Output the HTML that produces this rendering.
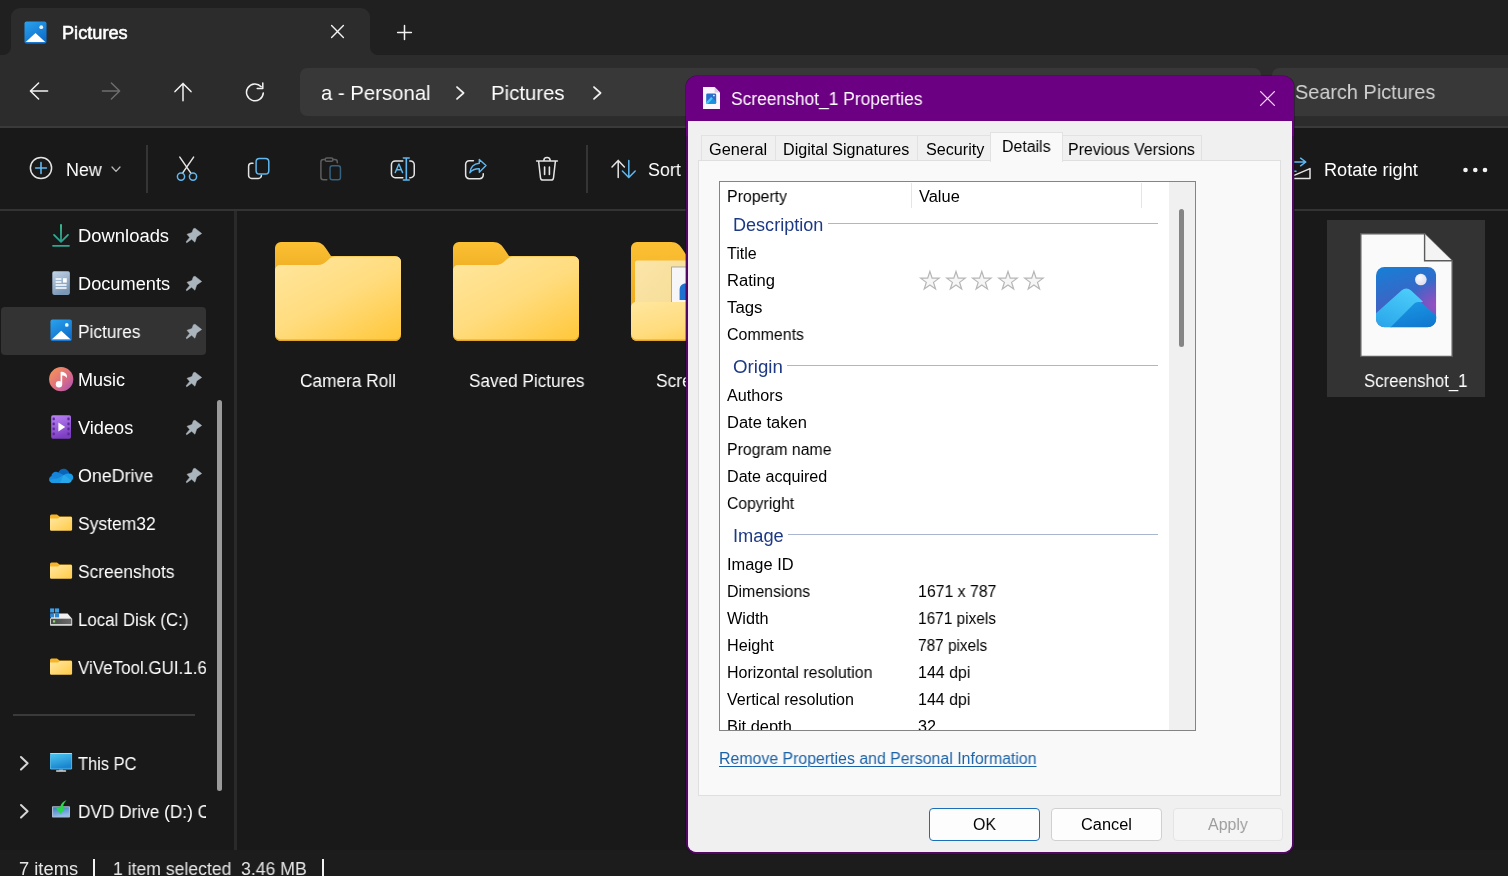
<!DOCTYPE html>
<html lang="en">
<head>
<meta charset="utf-8">
<title>Pictures - File Explorer</title>
<style>
*{margin:0;padding:0;box-sizing:border-box}
html,body{width:1508px;height:876px;overflow:hidden;background:#191919}
body{position:relative;font-family:"Liberation Sans",sans-serif;color:#fff}
.a{position:absolute}
.i{position:absolute;overflow:visible}
.t{position:absolute;white-space:pre;display:block;will-change:transform}
</style>
</head>
<body>
<div class="a" style="left:0px;top:0px;width:1508px;height:56px;background:#202020;"></div>
<div class="a" style="left:0px;top:55px;width:1508px;height:71px;background:#2c2c2c;"></div>
<div class="a" style="left:11px;top:8px;width:359px;height:48px;background:#2c2c2c;border-radius:9px 9px 0 0"></div>
<div class="a" style="left:3px;top:47px;width:8px;height:8px;background:radial-gradient(circle at 0 0,#202020 7.5px,#2c2c2c 8.5px)"></div>
<div class="a" style="left:370px;top:47px;width:8px;height:8px;background:radial-gradient(circle at 100% 0,#202020 7.5px,#2c2c2c 8.5px)"></div>
<svg class="i" style="left:24.3px;top:20.8px" width="23" height="23" viewBox="0 0 24 24" ><defs><linearGradient id="gtab" x1="0" y1="0" x2="0.6" y2="1"><stop offset="0" stop-color="#2aa3ee"/><stop offset="1" stop-color="#0f6fcb"/></linearGradient><clipPath id="ctab"><rect x="0.5" y="0.5" width="23" height="23" rx="2.2"/></clipPath></defs><rect x="0.5" y="0.5" width="23" height="23" rx="2.2" fill="url(#gtab)"/><g clip-path="url(#ctab)"><path d="M1.5 22.3 L12 12.6 L22.5 22.3 Z" fill="#ffffff"/><path d="M0.5 22 h23 v1.5 h-23z" fill="#1b78cf"/></g><circle cx="18" cy="6.4" r="2" fill="#e9f6ff"/></svg>
<span class="t" style="left:62.28px;top:22px;font-size:18px;line-height:23px;color:#fff;transform:scaleX(1.0097);transform-origin:0 50%;-webkit-text-stroke:0.55px #fff;">Pictures</span>
<svg class="i" style="left:331.4px;top:25.2px" width="13" height="13" viewBox="0 0 13 13" ><path d="M0.6 0.6 L12.4 12.4 M12.4 0.6 L0.6 12.4" fill="none" stroke="#f2f2f2" stroke-width="1.4" stroke-linecap="round" stroke-linejoin="round" /></svg>
<svg class="i" style="left:397px;top:24.8px" width="15" height="15" viewBox="0 0 15 15" ><path d="M7.5 0.6 V14.4 M0.6 7.5 H14.4" fill="none" stroke="#f2f2f2" stroke-width="1.5" stroke-linecap="round" stroke-linejoin="round" /></svg>
<svg class="i" style="left:29px;top:82.2px" width="20" height="18" viewBox="0 0 20 18" ><path d="M18.6 9 H1.6 M9.6 1 L1.4 9 L9.6 17" fill="none" stroke="#f2f2f2" stroke-width="1.5" stroke-linecap="round" stroke-linejoin="round" /></svg>
<svg class="i" style="left:101.2px;top:82.2px" width="20" height="18" viewBox="0 0 20 18" ><path d="M1.4 9 H18.4 M10.4 1 L18.6 9 L10.4 17" fill="none" stroke="#6d6d6d" stroke-width="1.5" stroke-linecap="round" stroke-linejoin="round" /></svg>
<svg class="i" style="left:173.6px;top:81.8px" width="18" height="20" viewBox="0 0 18 20" ><path d="M9 18.8 V1.6 M1 9.6 L9 1.4 L17 9.6" fill="none" stroke="#f2f2f2" stroke-width="1.5" stroke-linecap="round" stroke-linejoin="round" /></svg>
<svg class="i" style="left:245.2px;top:81.8px" width="20" height="20" viewBox="0 0 20 20" ><path d="M18.3 10.9 A8.4 8.4 0 1 1 16.2 4.8" fill="none" stroke="#f2f2f2" stroke-width="1.5" stroke-linecap="round" stroke-linejoin="round" /><path d="M17.8 1 V6.5 H12.2" fill="none" stroke="#f2f2f2" stroke-width="1.5" stroke-linecap="round" stroke-linejoin="round" /></svg>
<div class="a" style="left:300px;top:68px;width:961px;height:48px;background:#383838;border-radius:7px"></div>
<span class="t" style="left:320.63px;top:79px;font-size:21px;line-height:27px;color:#fff;transform:scaleX(0.9676);transform-origin:0 50%;">a - Personal</span>
<svg class="i" style="left:456px;top:85.6px" width="8.6" height="14" viewBox="0 0 8.6 14" ><path d="M1 1 L7.6 7.0 L1 13" fill="none" stroke="#f0f0f0" stroke-width="1.7" stroke-linecap="round" stroke-linejoin="round" /></svg>
<span class="t" style="left:491.46px;top:79px;font-size:21px;line-height:27px;color:#fff;transform:scaleX(0.9699);transform-origin:0 50%;">Pictures</span>
<svg class="i" style="left:593px;top:85.6px" width="8.6" height="14" viewBox="0 0 8.6 14" ><path d="M1 1 L7.6 7.0 L1 13" fill="none" stroke="#f0f0f0" stroke-width="1.7" stroke-linecap="round" stroke-linejoin="round" /></svg>
<div class="a" style="left:1272px;top:68px;width:250px;height:48px;background:#383838;border-radius:7px"></div>
<span class="t" style="left:1294.85px;top:78px;font-size:21px;line-height:27px;color:#d2d2d2;transform:scaleX(0.9469);transform-origin:0 50%;">Search Pictures</span>
<div class="a" style="left:0px;top:125.8px;width:1508px;height:2.4px;background:#3a3a3a;"></div>
<div class="a" style="left:0px;top:128px;width:1508px;height:81px;background:#191919;"></div>
<svg class="i" style="left:29.2px;top:156px" width="24" height="24" viewBox="0 0 24 24" ><circle cx="12" cy="12" r="10.6" fill="none" stroke="#e4e4e4" stroke-width="1.5"/><path d="M12 6.6 V17.4 M6.6 12 H17.4" fill="none" stroke="#5fb8f0" stroke-width="1.6" stroke-linecap="round" stroke-linejoin="round" /></svg>
<span class="t" style="left:65.91px;top:159px;font-size:18px;line-height:23px;color:#fff;transform:scaleX(0.9914);transform-origin:0 50%;">New</span>
<svg class="i" style="left:111.2px;top:166px" width="10" height="7" viewBox="0 0 10 7" ><path d="M1 1 L5 5.4 L9 1" fill="none" stroke="#b8b8b8" stroke-width="1.3" stroke-linecap="round" stroke-linejoin="round" /></svg>
<div class="a" style="left:146px;top:145px;width:1.6px;height:48px;background:#353535;"></div>
<svg class="i" style="left:175.4px;top:156.2px" width="24" height="26" viewBox="0 0 24 26" ><path d="M4.8 1.1 L15.7 16.9 M18.6 1.1 L7.7 16.9" fill="none" stroke="#e4e4e4" stroke-width="1.5" stroke-linecap="round" stroke-linejoin="round" /><circle cx="6" cy="20.6" r="3.6" fill="none" stroke="#5fb8f0" stroke-width="1.5"/><circle cx="18" cy="20.6" r="3.6" fill="none" stroke="#5fb8f0" stroke-width="1.5"/></svg>
<svg class="i" style="left:247.4px;top:157.2px" width="24" height="24" viewBox="0 0 24 24" ><path d="M6 6.2 H4.6 A3 3 0 0 0 1.6 9.2 V18.4 A3 3 0 0 0 4.6 21.4 H11.4 A3 3 0 0 0 14.4 18.4 V18.2" fill="none" stroke="#e4e4e4" stroke-width="1.5" stroke-linecap="round" stroke-linejoin="round" /><rect x="9.1" y="1.55" width="12.7" height="15.5" rx="3.3" fill="none" stroke="#5fb8f0" stroke-width="1.5"/></svg>
<svg class="i" style="left:319.2px;top:156px" width="24" height="26" viewBox="0 0 24 26" ><path d="M6.2 3.6 H4.4 A2.5 2.5 0 0 0 1.9 6.1 V21.3 A2.5 2.5 0 0 0 4.4 23.8 H7.8 M14 3.6 H15.8 A2.5 2.5 0 0 1 18.3 6.1 V6.8" fill="none" stroke="#5e5e5e" stroke-width="1.5" stroke-linecap="round" stroke-linejoin="round" /><rect x="6.2" y="1.95" width="7.8" height="3.4" rx="1.6" fill="none" stroke="#5e5e5e" stroke-width="1.5"/><rect x="11.05" y="9.85" width="10.4" height="14" rx="2.3" fill="none" stroke="#36627e" stroke-width="1.5"/></svg>
<svg class="i" style="left:390.4px;top:155.8px" width="26" height="26" viewBox="0 0 26 26" ><path d="M12.8 4.95 H5.2 A3.75 3.75 0 0 0 1.45 8.7 V17.9 A3.75 3.75 0 0 0 5.2 21.65 H12.8 M19.8 4.95 H20.5 A3.75 3.75 0 0 1 24.25 8.7 V17.9 A3.75 3.75 0 0 1 20.5 21.65 H19.8" fill="none" stroke="#e4e4e4" stroke-width="1.5" stroke-linecap="round" stroke-linejoin="round" /><path d="M13.4 2 H19.2 M16.3 2 V24 M13.4 24 H19.2" fill="none" stroke="#5fb8f0" stroke-width="1.6" stroke-linecap="round" stroke-linejoin="round" /><path d="M5.2 16.6 L8.9 8 L12.6 16.6 M6.5 13.7 H11.3" fill="none" stroke="#5fb8f0" stroke-width="1.4" stroke-linecap="round" stroke-linejoin="round" /></svg>
<svg class="i" style="left:463.6px;top:158px" width="24" height="24" viewBox="0 0 24 24" ><path d="M9.4 2.75 H5.2 A3.55 3.55 0 0 0 1.65 6.3 V17.1 A3.55 3.55 0 0 0 5.2 20.65 H15.7 A3.55 3.55 0 0 0 19.25 17.1 V15.8" fill="none" stroke="#e4e4e4" stroke-width="1.5" stroke-linecap="round" stroke-linejoin="round" /><path d="M15.3 1.5 L22 7.6 L15.3 14.2 V10.8 C11.2 10.6 8.2 11.8 5.8 14.8 C6.4 9.6 9.8 5.6 15.3 5.2 Z" fill="none" stroke="#5fb8f0" stroke-width="1.4" stroke-linecap="round" stroke-linejoin="round" /></svg>
<svg class="i" style="left:535px;top:156px" width="24" height="26" viewBox="0 0 24 26" ><path d="M1.6 4.9 H22.4 M8.8 4.7 A3.2 3.2 0 0 1 15.2 4.7 M3.6 5.2 L5.5 21.8 A2.5 2.5 0 0 0 8 24 H16 A2.5 2.5 0 0 0 18.5 21.8 L20.4 5.2" fill="none" stroke="#e4e4e4" stroke-width="1.5" stroke-linecap="round" stroke-linejoin="round" /><path d="M9.6 11 V18.4 M14.4 11 V18.4" fill="none" stroke="#e4e4e4" stroke-width="1.6" stroke-linecap="round" stroke-linejoin="round" /></svg>
<div class="a" style="left:586.4px;top:145px;width:1.6px;height:48px;background:#353535;"></div>
<svg class="i" style="left:611.4px;top:159px" width="26" height="20" viewBox="0 0 26 20" ><path d="M7.2 18.6 V1.6 M1 8 L7.2 1.4 L13.4 8" fill="none" stroke="#e4e4e4" stroke-width="1.5" stroke-linecap="round" stroke-linejoin="round" /><path d="M17.8 1.4 V18.4 M11.4 12 L17.8 18.6 L24.2 12" fill="none" stroke="#5fb8f0" stroke-width="1.5" stroke-linecap="round" stroke-linejoin="round" /></svg>
<span class="t" style="left:647.61px;top:159px;font-size:18px;line-height:23px;color:#fff;transform:scaleX(0.9937);transform-origin:0 50%;">Sort</span>
<svg class="i" style="left:1286px;top:156px" width="26" height="24" viewBox="0 0 26 24" ><path d="M3 6 H19.4 M14.6 2.2 L19.8 6 L14.6 9.8" fill="none" stroke="#5fb8f0" stroke-width="1.5" stroke-linecap="round" stroke-linejoin="round" /><path d="M5 15.3 H10" fill="none" stroke="#5fb8f0" stroke-width="1.5" stroke-linecap="round" stroke-linejoin="round" /><path d="M1 22.4 H24 V12.6 Z" fill="none" stroke="#e4e4e4" stroke-width="1.5" stroke-linecap="round" stroke-linejoin="round" /></svg>
<span class="t" style="left:1323.79px;top:159px;font-size:18px;line-height:23px;color:#fff;transform:scaleX(1.0087);transform-origin:0 50%;">Rotate right</span>
<svg class="i" style="left:1462.6px;top:166.8px" width="26" height="6" viewBox="0 0 26 6" ><circle cx="2.5" cy="3" r="2.3" fill="#f4f4f4"/><circle cx="12.3" cy="3" r="2.3" fill="#f4f4f4"/><circle cx="22" cy="3" r="2.3" fill="#f4f4f4"/></svg>
<div class="a" style="left:0px;top:209px;width:1508px;height:2px;background:#333333;"></div>
<div class="a" style="left:233.6px;top:211px;width:3.8px;height:639px;background:#2a2a2a;"></div>
<div class="a" style="left:1px;top:307px;width:205px;height:48px;background:#333333;border-radius:4px"></div>
<div class="a" style="left:0;top:211px;width:205.6px;height:639px;overflow:hidden">
<div class="a" style="left:0;top:-211px;width:300px;height:876px">
<span class="t" style="left:77.50px;top:225px;font-size:18px;line-height:23px;color:#fff;transform:scaleX(1.0227);transform-origin:0 50%;">Downloads</span>
<svg class="i" style="left:52px;top:224px" width="18" height="23" viewBox="0 0 18 23" ><defs><linearGradient id="gdl" x1="0" y1="0" x2="0" y2="1"><stop offset="0" stop-color="#3ad29f"/><stop offset="1" stop-color="#2a9d8f"/></linearGradient></defs><path d="M9 0.8 V17.6 M2 10.8 L9 17.8 L16 10.8" fill="none" stroke="url(#gdl)" stroke-width="1.7" stroke-linecap="round" stroke-linejoin="round"/><path d="M1 21.8 H17" fill="none" stroke="#2fa592" stroke-width="1.8" stroke-linecap="round"/></svg>
<span class="t" style="left:77.50px;top:273px;font-size:18px;line-height:23px;color:#fff;transform:scaleX(1.0111);transform-origin:0 50%;">Documents</span>
<svg class="i" style="left:51.9px;top:270.8px" width="18.2" height="24.2" viewBox="0 0 18.2 24.2" ><defs><linearGradient id="gdoc" x1="0" y1="0" x2="0.4" y2="1"><stop offset="0" stop-color="#c3d5e8"/><stop offset="1" stop-color="#7a97b6"/></linearGradient></defs><rect x="0.3" y="0.3" width="17.6" height="23.6" rx="1.8" fill="url(#gdoc)"/><path d="M3.6 8 H9.4 M3.6 11 H9.4 M3.6 14 H14.6 M3.6 17 H14.6" stroke="#fff" stroke-width="1.4" fill="none"/><rect x="11" y="7.2" width="3.8" height="4.4" fill="#fff"/></svg>
<span class="t" style="left:77.50px;top:321px;font-size:18px;line-height:23px;color:#fff;transform:scaleX(0.9609);transform-origin:0 50%;">Pictures</span>
<svg class="i" style="left:49.8px;top:319.4px" width="22.4" height="22.4" viewBox="0 0 24 24" ><defs><linearGradient id="gsb" x1="0" y1="0" x2="0.6" y2="1"><stop offset="0" stop-color="#2aa3ee"/><stop offset="1" stop-color="#0f6fcb"/></linearGradient><clipPath id="csb"><rect x="0.5" y="0.5" width="23" height="23" rx="2.2"/></clipPath></defs><rect x="0.5" y="0.5" width="23" height="23" rx="2.2" fill="url(#gsb)"/><g clip-path="url(#csb)"><path d="M1.5 22.3 L12 12.6 L22.5 22.3 Z" fill="#ffffff"/><path d="M0.5 22 h23 v1.5 h-23z" fill="#1b78cf"/></g><circle cx="18" cy="6.4" r="2" fill="#e9f6ff"/></svg>
<span class="t" style="left:77.50px;top:369px;font-size:18px;line-height:23px;color:#fff;transform:scaleX(1.0000);transform-origin:0 50%;">Music</span>
<svg class="i" style="left:48.8px;top:366.5px" width="24.4" height="24.4" viewBox="0 0 24.4 24.4" ><defs><linearGradient id="gmu" x1="0.1" y1="0.1" x2="0.9" y2="0.9"><stop offset="0" stop-color="#f5915a"/><stop offset="0.55" stop-color="#de6f80"/><stop offset="1" stop-color="#b455b0"/></linearGradient></defs><circle cx="12.2" cy="12.2" r="12.1" fill="url(#gmu)"/><circle cx="10" cy="17.2" r="3.2" fill="#fff"/><path d="M11.6 17.2 V4.9 C14 4.5 17 5.6 17.9 8.4 V11 C16.6 9 15 8.2 13.2 8.5 V17.2 Z" fill="#fff"/></svg>
<span class="t" style="left:77.50px;top:417px;font-size:18px;line-height:23px;color:#fff;transform:scaleX(1.0093);transform-origin:0 50%;">Videos</span>
<svg class="i" style="left:50.9px;top:414.9px" width="20.2" height="24" viewBox="0 0 20.2 24" ><defs><linearGradient id="gvi" x1="0" y1="0" x2="0.3" y2="1"><stop offset="0" stop-color="#bd86f7"/><stop offset="1" stop-color="#7d3ec2"/></linearGradient></defs><rect x="0.2" y="0.2" width="19.8" height="23.6" rx="1.8" fill="url(#gvi)"/><rect x="1.6" y="2.6" width="2.2" height="2.6" rx="0.4" fill="#5a2a9a"/><rect x="1.6" y="7.6" width="2.2" height="2.6" rx="0.4" fill="#5a2a9a"/><rect x="1.6" y="12.6" width="2.2" height="2.6" rx="0.4" fill="#5a2a9a"/><rect x="1.6" y="17.6" width="2.2" height="2.6" rx="0.4" fill="#5a2a9a"/><rect x="16.4" y="2.6" width="2.2" height="2.6" rx="0.4" fill="#5a2a9a"/><rect x="16.4" y="7.6" width="2.2" height="2.6" rx="0.4" fill="#5a2a9a"/><rect x="16.4" y="12.6" width="2.2" height="2.6" rx="0.4" fill="#5a2a9a"/><rect x="16.4" y="17.6" width="2.2" height="2.6" rx="0.4" fill="#5a2a9a"/><path d="M7.4 7.4 L14.2 12 L7.4 16.6 Z" fill="#fff"/></svg>
<span class="t" style="left:77.50px;top:465px;font-size:18px;line-height:23px;color:#fff;transform:scaleX(0.9907);transform-origin:0 50%;">OneDrive</span>
<svg class="i" style="left:48.8px;top:467.6px" width="24.4" height="15.2" viewBox="0 0 24.4 15.2" ><path d="M9.2 4.6 C10.4 1.8 13 0.4 15.4 0.8 C18 1.2 19.8 3.2 20.4 5.6 L12 10 Z" fill="#0a64b8"/><path d="M9.2 4.4 C6.4 2.8 2.6 4.6 2.4 8.2 C0.8 8.8 0 10.2 0.2 11.8 L9 12.6 L15 7 Z" fill="#1684d8"/><path d="M20.4 5.6 C22.8 5.6 24.4 7.6 24.2 9.8 C24.1 11 23.4 12.2 22.6 12.8 L10 11 L15.6 6.6 C17 5.6 18.8 5.2 20.4 5.6Z" fill="#1a9be8"/><path d="M0.2 11.8 C0.4 13.6 1.8 15 4 15 H19.6 C21 15 22 14 22.7 12.7 L15.2 6.9 L9 10.6 Z" fill="#28a8ea"/><path d="M2.4 8.2 C0.8 8.8 0 10.2 0.2 11.8 C0.4 13.6 1.8 15 4 15 H11 L14 8 L9 10.4 Z" fill="#1490df" opacity="0.6"/></svg>
<span class="t" style="left:77.50px;top:513px;font-size:18px;line-height:23px;color:#fff;transform:scaleX(0.9709);transform-origin:0 50%;">System32</span>
<svg class="i" style="left:49.9px;top:513.8px" width="22.1" height="16.8" viewBox="0 0 22.1 16.8" ><defs><linearGradient id="fss7" x1="0" y1="0" x2="1" y2="1"><stop offset="0" stop-color="#ffe7a1"/><stop offset="1" stop-color="#ffcb48"/></linearGradient></defs><path d="M0 2 A1.6 1.6 0 0 1 1.6 0.4 H7 L9.6 2.4 H20.6 A1.4 1.4 0 0 1 22 3.8 V6 H0 Z" fill="#f5b529"/><path d="M0 4.6 H8 L9.8 3 H20.8 A1.3 1.3 0 0 1 22.1 4.3 V15.4 A1.3 1.3 0 0 1 20.8 16.7 H1.3 A1.3 1.3 0 0 1 0 15.4 Z" fill="url(#fss7)"/></svg>
<span class="t" style="left:77.50px;top:561px;font-size:18px;line-height:23px;color:#fff;transform:scaleX(0.9646);transform-origin:0 50%;">Screenshots</span>
<svg class="i" style="left:49.9px;top:561.8px" width="22.1" height="16.8" viewBox="0 0 22.1 16.8" ><defs><linearGradient id="fss8" x1="0" y1="0" x2="1" y2="1"><stop offset="0" stop-color="#ffe7a1"/><stop offset="1" stop-color="#ffcb48"/></linearGradient></defs><path d="M0 2 A1.6 1.6 0 0 1 1.6 0.4 H7 L9.6 2.4 H20.6 A1.4 1.4 0 0 1 22 3.8 V6 H0 Z" fill="#f5b529"/><path d="M0 4.6 H8 L9.8 3 H20.8 A1.3 1.3 0 0 1 22.1 4.3 V15.4 A1.3 1.3 0 0 1 20.8 16.7 H1.3 A1.3 1.3 0 0 1 0 15.4 Z" fill="url(#fss8)"/></svg>
<span class="t" style="left:77.50px;top:609px;font-size:18px;line-height:23px;color:#fff;transform:scaleX(0.9359);transform-origin:0 50%;">Local Disk (C:)</span>
<svg class="i" style="left:49.9px;top:607.6px" width="22.3" height="17.8" viewBox="0 0 22.3 17.8" ><defs><linearGradient id="gdk" x1="0" y1="0" x2="1" y2="0"><stop offset="0" stop-color="#474a47"/><stop offset="1" stop-color="#6a6a6a"/></linearGradient></defs><path d="M0.2 10.8 L3.2 5.4 H17.6 L22.2 10.8 Z" fill="#f0f0f0"/><rect x="0.1" y="10.4" width="22.1" height="7.3" rx="0.6" fill="#e0e0e0"/><rect x="1" y="10.9" width="20.3" height="5.2" fill="url(#gdk)"/><rect x="3" y="12.3" width="2.2" height="2.2" fill="#86dc6c"/><rect x="0.1" y="0.4" width="4.1" height="4.1" fill="#3ba0ea"/><rect x="5" y="0.4" width="4.1" height="4.1" fill="#3ba0ea"/><rect x="0.1" y="5.3" width="4.1" height="4.1" fill="#2c86d2"/><rect x="5" y="5.3" width="4.1" height="4.1" fill="#2c86d2"/></svg>
<span class="t" style="left:77.50px;top:657px;font-size:18px;line-height:23px;color:#fff;transform:scaleX(0.9419);transform-origin:0 50%;">ViVeTool.GUI.1.6</span>
<svg class="i" style="left:49.9px;top:657.8px" width="22.1" height="16.8" viewBox="0 0 22.1 16.8" ><defs><linearGradient id="fss10" x1="0" y1="0" x2="1" y2="1"><stop offset="0" stop-color="#ffe7a1"/><stop offset="1" stop-color="#ffcb48"/></linearGradient></defs><path d="M0 2 A1.6 1.6 0 0 1 1.6 0.4 H7 L9.6 2.4 H20.6 A1.4 1.4 0 0 1 22 3.8 V6 H0 Z" fill="#f5b529"/><path d="M0 4.6 H8 L9.8 3 H20.8 A1.3 1.3 0 0 1 22.1 4.3 V15.4 A1.3 1.3 0 0 1 20.8 16.7 H1.3 A1.3 1.3 0 0 1 0 15.4 Z" fill="url(#fss10)"/></svg>
<span class="t" style="left:77.50px;top:753px;font-size:18px;line-height:23px;color:#fff;transform:scaleX(0.9127);transform-origin:0 50%;">This PC</span>
<svg class="i" style="left:49.8px;top:752.8px" width="22.2" height="18.8" viewBox="0 0 22.2 18.8" ><defs><linearGradient id="gpc" x1="0" y1="0" x2="0.35" y2="1"><stop offset="0" stop-color="#4cc6ee"/><stop offset="1" stop-color="#1b86d0"/></linearGradient></defs><rect x="0" y="0" width="22.1" height="16.4" rx="1.2" fill="#56b4e4"/><rect x="0.1" y="0" width="21.9" height="1" rx="0.5" fill="#a6dff5"/><rect x="0.9" y="0.9" width="20.3" height="14.5" rx="0.6" fill="url(#gpc)"/><rect x="9.2" y="16.4" width="3.8" height="1.2" fill="#98a6b2"/><rect x="6" y="17.3" width="10.2" height="1.4" rx="0.6" fill="#d2dae0"/></svg>
<span class="t" style="left:77.50px;top:801px;font-size:18px;line-height:23px;color:#fff;transform:scaleX(0.9569);transform-origin:0 50%;">DVD Drive (D:) C</span>
<svg class="i" style="left:52px;top:799.6px" width="18" height="17.8" viewBox="0 0 18 17.8" ><defs><linearGradient id="gdv" x1="0" y1="0" x2="0.3" y2="1"><stop offset="0" stop-color="#3d7cc6"/><stop offset="1" stop-color="#8fbbe6"/></linearGradient></defs><rect x="0" y="6.2" width="18" height="11.4" rx="0.8" fill="#a8bad2"/><rect x="1.1" y="7.3" width="15.8" height="9.2" fill="url(#gdv)"/><path d="M14.6 0.2 C10.6 1.4 8.4 4.4 8.2 8.2 L4 7.8 L8.4 14.2 L12.8 8.4 L10.8 8.3 C11 5 12.2 2.4 14.6 0.2 Z" fill="#27d94a"/></svg>
</div></div>
<svg class="i" style="left:185px;top:227px" width="18" height="17" viewBox="0 0 18 17" ><path d="M10 1.2 L16.7 6.5 L11.7 9.9 L9.9 15.2 L6.6 12.2 L1.8 15.8 L1 15 L4.7 10.4 L2 7.3 L7 5.5 L8.4 1.8 Z" fill="#a9b4bc" stroke="#a9b4bc" stroke-width="0.5" stroke-linejoin="round"/></svg>
<svg class="i" style="left:185px;top:275px" width="18" height="17" viewBox="0 0 18 17" ><path d="M10 1.2 L16.7 6.5 L11.7 9.9 L9.9 15.2 L6.6 12.2 L1.8 15.8 L1 15 L4.7 10.4 L2 7.3 L7 5.5 L8.4 1.8 Z" fill="#a9b4bc" stroke="#a9b4bc" stroke-width="0.5" stroke-linejoin="round"/></svg>
<svg class="i" style="left:185px;top:323px" width="18" height="17" viewBox="0 0 18 17" ><path d="M10 1.2 L16.7 6.5 L11.7 9.9 L9.9 15.2 L6.6 12.2 L1.8 15.8 L1 15 L4.7 10.4 L2 7.3 L7 5.5 L8.4 1.8 Z" fill="#a9b4bc" stroke="#a9b4bc" stroke-width="0.5" stroke-linejoin="round"/></svg>
<svg class="i" style="left:185px;top:371px" width="18" height="17" viewBox="0 0 18 17" ><path d="M10 1.2 L16.7 6.5 L11.7 9.9 L9.9 15.2 L6.6 12.2 L1.8 15.8 L1 15 L4.7 10.4 L2 7.3 L7 5.5 L8.4 1.8 Z" fill="#a9b4bc" stroke="#a9b4bc" stroke-width="0.5" stroke-linejoin="round"/></svg>
<svg class="i" style="left:185px;top:419px" width="18" height="17" viewBox="0 0 18 17" ><path d="M10 1.2 L16.7 6.5 L11.7 9.9 L9.9 15.2 L6.6 12.2 L1.8 15.8 L1 15 L4.7 10.4 L2 7.3 L7 5.5 L8.4 1.8 Z" fill="#a9b4bc" stroke="#a9b4bc" stroke-width="0.5" stroke-linejoin="round"/></svg>
<svg class="i" style="left:185px;top:467px" width="18" height="17" viewBox="0 0 18 17" ><path d="M10 1.2 L16.7 6.5 L11.7 9.9 L9.9 15.2 L6.6 12.2 L1.8 15.8 L1 15 L4.7 10.4 L2 7.3 L7 5.5 L8.4 1.8 Z" fill="#a9b4bc" stroke="#a9b4bc" stroke-width="0.5" stroke-linejoin="round"/></svg>
<div class="a" style="left:13px;top:714px;width:182px;height:1.6px;background:#3a3a3a;"></div>
<svg class="i" style="left:19.6px;top:756.2px" width="8.6" height="14.6" viewBox="0 0 8.6 14.6" ><path d="M1 1 L7.6 7.3 L1 13.6" fill="none" stroke="#d6d6d6" stroke-width="2" stroke-linecap="round" stroke-linejoin="round" /></svg>
<svg class="i" style="left:19.6px;top:804.2px" width="8.6" height="14.6" viewBox="0 0 8.6 14.6" ><path d="M1 1 L7.6 7.3 L1 13.6" fill="none" stroke="#d6d6d6" stroke-width="2" stroke-linecap="round" stroke-linejoin="round" /></svg>
<div class="a" style="left:217px;top:400px;width:5px;height:391px;background:#9b9b9b;border-radius:2.5px"></div>
<svg class="i" style="left:275px;top:241.8px" width="126" height="100" viewBox="0 0 126 100" ><defs><linearGradient id="fba" x1="0" y1="0" x2="0" y2="1"><stop offset="0" stop-color="#fcc033"/><stop offset="1" stop-color="#eaa820"/></linearGradient><linearGradient id="ffa" x1="0.1" y1="0" x2="0.9" y2="1"><stop offset="0" stop-color="#ffe69c"/><stop offset="0.5" stop-color="#ffdc7e"/><stop offset="1" stop-color="#ffc93f"/></linearGradient></defs><path d="M0 6 A6 6 0 0 1 6 0 H40 C46 0 49 3 52 8 L56 14 H120 A6 6 0 0 1 126 20 V40 H0 Z" fill="url(#fba)"/><path d="M0 28 A5 5 0 0 1 5 23 H42 C47 23 50 21 53 18 C55 16 57 14.6 61 14.6 H121 A5 5 0 0 1 126 19.6 V93 A6 6 0 0 1 120 99 H6 A6 6 0 0 1 0 93 Z" fill="url(#ffa)"/><path d="M0 92 V93 A6 6 0 0 0 6 99 H120 A6 6 0 0 0 126 93 V92 A6 6 0 0 1 120 97.6 H6 A6 6 0 0 1 0 92Z" fill="#e2a728"/></svg>
<svg class="i" style="left:453px;top:241.8px" width="126" height="100" viewBox="0 0 126 100" ><defs><linearGradient id="fbb" x1="0" y1="0" x2="0" y2="1"><stop offset="0" stop-color="#fcc033"/><stop offset="1" stop-color="#eaa820"/></linearGradient><linearGradient id="ffb" x1="0.1" y1="0" x2="0.9" y2="1"><stop offset="0" stop-color="#ffe69c"/><stop offset="0.5" stop-color="#ffdc7e"/><stop offset="1" stop-color="#ffc93f"/></linearGradient></defs><path d="M0 6 A6 6 0 0 1 6 0 H40 C46 0 49 3 52 8 L56 14 H120 A6 6 0 0 1 126 20 V40 H0 Z" fill="url(#fbb)"/><path d="M0 28 A5 5 0 0 1 5 23 H42 C47 23 50 21 53 18 C55 16 57 14.6 61 14.6 H121 A5 5 0 0 1 126 19.6 V93 A6 6 0 0 1 120 99 H6 A6 6 0 0 1 0 93 Z" fill="url(#ffb)"/><path d="M0 92 V93 A6 6 0 0 0 6 99 H120 A6 6 0 0 0 126 93 V92 A6 6 0 0 1 120 97.6 H6 A6 6 0 0 1 0 92Z" fill="#e2a728"/></svg>
<svg class="i" style="left:631.2px;top:241.6px" width="126" height="100" viewBox="0 0 126 100" ><defs><linearGradient id="obc" x1="0" y1="0" x2="0" y2="1"><stop offset="0" stop-color="#fcc033"/><stop offset="1" stop-color="#eaa820"/></linearGradient><linearGradient id="opc" x1="0" y1="0" x2="1" y2="0.4"><stop offset="0" stop-color="#fbe5a8"/><stop offset="1" stop-color="#f3d88f"/></linearGradient><linearGradient id="ofc" x1="0.1" y1="0" x2="0.9" y2="1"><stop offset="0" stop-color="#ffe69c"/><stop offset="0.5" stop-color="#ffdc7e"/><stop offset="1" stop-color="#ffc93f"/></linearGradient></defs><path d="M0 6 A6 6 0 0 1 6 0 H40 C46 0 49 3 52 8 L56 14 H120 A6 6 0 0 1 126 20 V80 H0 Z" fill="url(#obc)"/><rect x="4" y="18.4" width="118" height="50" rx="2.4" fill="url(#opc)"/><rect x="40.6" y="25" width="60" height="44" fill="#f6f6f8" stroke="#8e9aa8" stroke-width="0.8"/><path d="M48.6 58 V48 C48.6 44 51 41.6 54.6 41.6 H70 V58 Z" fill="#1f6fd0"/><path d="M0 65 A5 5 0 0 1 5 60 H121 A5 5 0 0 1 126 65 V93 A6 6 0 0 1 120 99 H6 A6 6 0 0 1 0 93 Z" fill="url(#ofc)"/><path d="M0 92 V93 A6 6 0 0 0 6 99 H120 A6 6 0 0 0 126 93 V92 A6 6 0 0 1 120 97.6 H6 A6 6 0 0 1 0 92Z" fill="#e2a728"/></svg>
<span class="t" style="left:300.04px;top:370px;font-size:18px;line-height:23px;color:#fff;transform:scaleX(0.9592);transform-origin:0 50%;">Camera Roll</span>
<span class="t" style="left:468.55px;top:370px;font-size:18px;line-height:23px;color:#fff;transform:scaleX(0.9538);transform-origin:0 50%;">Saved Pictures</span>
<span class="t" style="left:656.03px;top:370px;font-size:18px;line-height:23px;color:#fff;transform:scaleX(0.9653);transform-origin:0 50%;">Screenshots</span>
<div class="a" style="left:1327px;top:220px;width:158px;height:177px;background:#333333;"></div>
<svg class="i" style="left:1360px;top:232.6px" width="93" height="124.2" viewBox="0 0 93 124.2" ><path d="M0.8 0.8 H64.6 L92.2 27.8 V123.4 H0.8 Z" fill="#fafafa" stroke="#5b5b5b" stroke-width="1.4"/><path d="M64.6 0.8 V27.8 H92.2" fill="#f4f4f4" stroke="#5b5b5b" stroke-width="1.4" stroke-linejoin="miter"/></svg>
<svg class="i" style="left:1376.1px;top:266.8px" width="60.2" height="60.2" viewBox="0 0 60 60" ><defs><linearGradient id="pbbig" x1="0.3" y1="0" x2="0.6" y2="1"><stop offset="0" stop-color="#1a7cd4"/><stop offset="0.5" stop-color="#3a66c6"/><stop offset="1" stop-color="#545abf"/></linearGradient><radialGradient id="prbig" cx="60" cy="38" r="26" gradientUnits="userSpaceOnUse"><stop offset="0" stop-color="#9a4ec2"/><stop offset="1" stop-color="#9a4ec2" stop-opacity="0"/></radialGradient><linearGradient id="pmbig" x1="0.7" y1="0" x2="0.2" y2="1"><stop offset="0" stop-color="#4ccdfa"/><stop offset="1" stop-color="#2aa6ea"/></linearGradient><linearGradient id="pnbig" x1="0.3" y1="0" x2="0.7" y2="1"><stop offset="0" stop-color="#1b96e4"/><stop offset="1" stop-color="#0f78cf"/></linearGradient><radialGradient id="psbig" cx="0.4" cy="0.35" r="0.7"><stop offset="0" stop-color="#fafaff"/><stop offset="1" stop-color="#dcdcec"/></radialGradient><clipPath id="pcbig"><rect x="0" y="0" width="60" height="60" rx="8.4"/></clipPath></defs><g clip-path="url(#pcbig)"><rect width="60" height="60" fill="url(#pbbig)"/><rect width="60" height="60" fill="url(#prbig)"/><path d="M-1 47 L25.4 23.4 C28.4 20.7 32 20.7 35 23.5 L47 34.6 L40 36.4 L15 61 H-1 Z" fill="url(#pmbig)"/><path d="M13.6 61 L37.4 37.2 C40 34.5 43.6 34.1 46.6 36.7 L61 49.6 V61 Z" fill="url(#pnbig)"/></g><circle cx="44.7" cy="12.5" r="5.8" fill="url(#psbig)"/></svg>
<span class="t" style="left:1363.87px;top:370px;font-size:18px;line-height:23px;color:#fff;transform:scaleX(0.9321);transform-origin:0 50%;">Screenshot_1</span>
<div class="a" style="left:0px;top:850px;width:1508px;height:26px;background:#1c1c1c;"></div>
<span class="t" style="left:19.38px;top:858px;font-size:18px;line-height:23px;color:#e6e6e6;transform:scaleX(1.0179);transform-origin:0 50%;">7 items</span>
<div class="a" style="left:93.4px;top:859px;width:1.8px;height:17px;background:#f2f2f2;"></div>
<span class="t" style="left:112.62px;top:858px;font-size:18px;line-height:23px;color:#e6e6e6;transform:scaleX(0.9782);transform-origin:0 50%;">1 item selected</span>
<span class="t" style="left:240.62px;top:858px;font-size:18px;line-height:23px;color:#e6e6e6;transform:scaleX(0.9815);transform-origin:0 50%;">3.46 MB</span>
<div class="a" style="left:321.8px;top:859px;width:1.8px;height:17px;background:#f2f2f2;"></div>
<div class="a" style="left:685.7px;top:75.8px;width:608.5px;height:778.6px;background:#500862;border-radius:11px;box-shadow:0 0 0 0.6px rgba(30,0,40,.55)"></div>
<div class="a" style="left:685.7px;top:75.8px;width:608.5px;height:60px;background:#6c0082;border-radius:11px 11px 0 0"></div>
<div class="a" style="left:688.2px;top:121px;width:603.8px;height:730.8px;background:#f0f0f0;border-radius:0 0 8.5px 8.5px;box-shadow:inset 0 0 0 1px #f6e9f8"></div>
<svg class="i" style="left:702.6px;top:87px" width="17" height="22" viewBox="0 0 17 22" ><path d="M0 0 H11.6 L17 5.4 V22 H0 Z" fill="#fbf6fd"/><path d="M11.6 0 V5.4 H17 Z" fill="#d9cfe0"/><defs><linearGradient id="fsm" x1="0" y1="0" x2="1" y2="1"><stop offset="0" stop-color="#1b74d0"/><stop offset="1" stop-color="#4a5fc0"/></linearGradient></defs><rect x="3.2" y="6.5" width="10" height="10.2" rx="1.3" fill="url(#fsm)"/><path d="M3.3 15 L8.2 10 L13.2 14.8 V15.5 A1.2 1.2 0 0 1 12 16.7 H4.4 A1.2 1.2 0 0 1 3.2 15.5 Z" fill="#1d8fe0"/><path d="M3.3 15 L8.2 10 L9.8 11.5 L4.8 16.7 H4.4 A1.2 1.2 0 0 1 3.2 15.5 Z" fill="#4cc4f7"/><circle cx="10.9" cy="8.5" r="0.85" fill="#fff"/></svg>
<span class="t" style="left:730.63px;top:88px;font-size:18px;line-height:23px;color:#fff;transform:scaleX(0.9673);transform-origin:0 50%;">Screenshot_1 Properties</span>
<svg class="i" style="left:1260px;top:91.2px" width="15" height="15" viewBox="0 0 15 15" ><path d="M0.6 0.6 L14.4 14.4 M14.4 0.6 L0.6 14.4" fill="none" stroke="#f8ddff" stroke-width="1.3" stroke-linecap="round" stroke-linejoin="round" /></svg>
<div class="a" style="left:701px;top:135px;width:74.60000000000002px;height:26px;background:#f0f0f0;border:1px solid #e2e2e2;border-bottom:none;overflow:hidden"></div>
<div class="a" style="left:774.6px;top:135px;width:143.79999999999995px;height:26px;background:#f0f0f0;border:1px solid #e2e2e2;border-bottom:none;overflow:hidden"></div>
<div class="a" style="left:917.4px;top:135px;width:74.39999999999998px;height:26px;background:#f0f0f0;border:1px solid #e2e2e2;border-bottom:none;overflow:hidden"></div>
<div class="a" style="left:1062px;top:135px;width:140px;height:26px;background:#f0f0f0;border:1px solid #e2e2e2;border-bottom:none;overflow:hidden"></div>
<div class="a" style="left:698px;top:160px;width:583px;height:636px;background:#f9f9f9;border:1px solid #dfdfdf"></div>
<div class="a" style="left:698px;top:135px;width:583px;height:22.8px;overflow:hidden"><div class="a" style="left:-698px;top:-135px;width:1508px;height:300px">
<span class="t" style="left:708.58px;top:139px;font-size:16px;line-height:21px;color:#000;transform:scaleX(1.0218);transform-origin:0 50%;">General</span>
<span class="t" style="left:782.99px;top:139px;font-size:16px;line-height:21px;color:#000;transform:scaleX(1.0065);transform-origin:0 50%;">Digital Signatures</span>
<span class="t" style="left:925.99px;top:139px;font-size:16px;line-height:21px;color:#000;transform:scaleX(1.0105);transform-origin:0 50%;">Security</span>
<span class="t" style="left:1067.81px;top:139px;font-size:16px;line-height:21px;color:#000;transform:scaleX(0.9906);transform-origin:0 50%;">Previous Versions</span>
</div></div>
<div class="a" style="left:990px;top:132px;width:73px;height:30px;background:#f9f9f9;border:1px solid #e2e2e2;border-bottom:none"></div>
<span class="t" style="left:1002.01px;top:136px;font-size:16px;line-height:21px;color:#000;transform:scaleX(0.9917);transform-origin:0 50%;">Details</span>
<div class="a" style="left:719px;top:181px;width:477px;height:550px;background:#fff;border:1px solid #848484"></div>
<div class="a" style="left:1169.4px;top:182px;width:25.6px;height:548px;background:#f0f0f0;"></div>
<div class="a" style="left:1178.6px;top:209px;width:5.6px;height:138.4px;background:#858585;border-radius:2.8px"></div>
<div class="a" style="left:911.4px;top:183px;width:1px;height:25px;background:#e5e5e5;"></div>
<div class="a" style="left:1141.2px;top:183px;width:1px;height:25px;background:#e5e5e5;"></div>
<span class="t" style="left:726.51px;top:186px;font-size:16px;line-height:21px;color:#000;transform:scaleX(0.9915);transform-origin:0 50%;">Property</span>
<span class="t" style="left:918.60px;top:186px;font-size:16px;line-height:21px;color:#000;transform:scaleX(1.0256);transform-origin:0 50%;">Value</span>
<span class="t" style="left:733.30px;top:214px;font-size:18px;line-height:23px;color:#1d3985;transform:scaleX(1.0034);transform-origin:0 50%;">Description</span>
<div class="a" style="left:827.6px;top:222.6px;width:330.4px;height:1.2px;background:#a9b7cf;"></div>
<span class="t" style="left:733.26px;top:356px;font-size:18px;line-height:23px;color:#1d3985;transform:scaleX(1.0370);transform-origin:0 50%;">Origin</span>
<div class="a" style="left:787px;top:364.6px;width:371px;height:1.2px;background:#a9b7cf;"></div>
<span class="t" style="left:733.27px;top:525px;font-size:18px;line-height:23px;color:#1d3985;transform:scaleX(1.0149);transform-origin:0 50%;">Image</span>
<div class="a" style="left:788px;top:533.6px;width:370px;height:1.2px;background:#a9b7cf;"></div>
<span class="t" style="left:727.00px;top:243px;font-size:16px;line-height:21px;color:#000;transform:scaleX(1.0000);transform-origin:0 50%;">Title</span>
<span class="t" style="left:727.00px;top:270px;font-size:16px;line-height:21px;color:#000;transform:scaleX(1.0356);transform-origin:0 50%;">Rating</span>
<span class="t" style="left:727.00px;top:297px;font-size:16px;line-height:21px;color:#000;transform:scaleX(1.0485);transform-origin:0 50%;">Tags</span>
<span class="t" style="left:727.00px;top:324px;font-size:16px;line-height:21px;color:#000;transform:scaleX(0.9948);transform-origin:0 50%;">Comments</span>
<span class="t" style="left:727.00px;top:385px;font-size:16px;line-height:21px;color:#000;transform:scaleX(1.0109);transform-origin:0 50%;">Authors</span>
<span class="t" style="left:727.00px;top:412px;font-size:16px;line-height:21px;color:#000;transform:scaleX(1.0316);transform-origin:0 50%;">Date taken</span>
<span class="t" style="left:727.00px;top:439px;font-size:16px;line-height:21px;color:#000;transform:scaleX(0.9867);transform-origin:0 50%;">Program name</span>
<span class="t" style="left:727.00px;top:466px;font-size:16px;line-height:21px;color:#000;transform:scaleX(1.0061);transform-origin:0 50%;">Date acquired</span>
<span class="t" style="left:727.00px;top:493px;font-size:16px;line-height:21px;color:#000;transform:scaleX(0.9794);transform-origin:0 50%;">Copyright</span>
<span class="t" style="left:727.00px;top:554px;font-size:16px;line-height:21px;color:#000;transform:scaleX(1.0250);transform-origin:0 50%;">Image ID</span>
<span class="t" style="left:727.00px;top:581px;font-size:16px;line-height:21px;color:#000;transform:scaleX(0.9952);transform-origin:0 50%;">Dimensions</span>
<span class="t" style="left:727.00px;top:608px;font-size:16px;line-height:21px;color:#000;transform:scaleX(1.0150);transform-origin:0 50%;">Width</span>
<span class="t" style="left:727.00px;top:635px;font-size:16px;line-height:21px;color:#000;transform:scaleX(1.0130);transform-origin:0 50%;">Height</span>
<span class="t" style="left:727.00px;top:662px;font-size:16px;line-height:21px;color:#000;transform:scaleX(0.9972);transform-origin:0 50%;">Horizontal resolution</span>
<span class="t" style="left:727.00px;top:689px;font-size:16px;line-height:21px;color:#000;transform:scaleX(1.0048);transform-origin:0 50%;">Vertical resolution</span>
<span class="t" style="left:918.20px;top:581px;font-size:16px;line-height:21px;color:#000;transform:scaleX(0.9897);transform-origin:0 50%;">1671 x 787</span>
<span class="t" style="left:918.20px;top:608px;font-size:16px;line-height:21px;color:#000;transform:scaleX(0.9630);transform-origin:0 50%;">1671 pixels</span>
<span class="t" style="left:918.20px;top:635px;font-size:16px;line-height:21px;color:#000;transform:scaleX(0.9611);transform-origin:0 50%;">787 pixels</span>
<span class="t" style="left:918.20px;top:662px;font-size:16px;line-height:21px;color:#000;transform:scaleX(0.9962);transform-origin:0 50%;">144 dpi</span>
<span class="t" style="left:918.20px;top:689px;font-size:16px;line-height:21px;color:#000;transform:scaleX(0.9962);transform-origin:0 50%;">144 dpi</span>
<div class="a" style="left:720px;top:710px;width:449px;height:19.6px;overflow:hidden"><div class="a" style="left:-720px;top:-710px;width:1508px;height:876px">
<span class="t" style="left:727.00px;top:716px;font-size:16px;line-height:21px;color:#000;transform:scaleX(1.0258);transform-origin:0 50%;">Bit depth</span>
<span class="t" style="left:918.20px;top:716px;font-size:16px;line-height:21px;color:#000;transform:scaleX(1.0118);transform-origin:0 50%;">32</span>
</div></div>
<svg class="i" style="left:918px;top:269px" width="128" height="22" viewBox="0 0 128 22" ><polygon points="11.90,2.50 14.12,9.14 21.13,9.20 15.50,13.37 17.60,20.05 11.90,15.98 6.20,20.05 8.30,13.37 2.67,9.20 9.68,9.14" fill="#f6f6f6" stroke="#b6b6b6" stroke-width="1.2" stroke-linejoin="miter"/><polygon points="38.00,2.50 40.22,9.14 47.23,9.20 41.60,13.37 43.70,20.05 38.00,15.98 32.30,20.05 34.40,13.37 28.77,9.20 35.78,9.14" fill="#f6f6f6" stroke="#b6b6b6" stroke-width="1.2" stroke-linejoin="miter"/><polygon points="63.80,2.50 66.02,9.14 73.03,9.20 67.40,13.37 69.50,20.05 63.80,15.98 58.10,20.05 60.20,13.37 54.57,9.20 61.58,9.14" fill="#f6f6f6" stroke="#b6b6b6" stroke-width="1.2" stroke-linejoin="miter"/><polygon points="90.00,2.50 92.22,9.14 99.23,9.20 93.60,13.37 95.70,20.05 90.00,15.98 84.30,20.05 86.40,13.37 80.77,9.20 87.78,9.14" fill="#f6f6f6" stroke="#b6b6b6" stroke-width="1.2" stroke-linejoin="miter"/><polygon points="115.90,2.50 118.12,9.14 125.13,9.20 119.50,13.37 121.60,20.05 115.90,15.98 110.20,20.05 112.30,13.37 106.67,9.20 113.68,9.14" fill="#f6f6f6" stroke="#b6b6b6" stroke-width="1.2" stroke-linejoin="miter"/></svg>
<span class="t" style="left:719.21px;top:748px;font-size:16px;line-height:21px;color:#1a62a8;transform:scaleX(0.9918);transform-origin:0 50%;text-decoration:underline;text-decoration-thickness:1px;text-underline-offset:2px;">Remove Properties and Personal Information</span>
<div class="a" style="left:929px;top:808px;width:111px;height:33px;background:#fdfdfd;border:1.6px solid #1a6fb8;border-radius:4px"></div>
<div class="a" style="left:1051px;top:808px;width:111px;height:33px;background:#fdfdfd;border:1px solid #d0d0d0;border-radius:4px"></div>
<div class="a" style="left:1173px;top:808px;width:110px;height:33px;background:#f5f5f5;border:1px solid #e4e4e4;border-radius:4px"></div>
<span class="t" style="left:972.61px;top:814px;font-size:16px;line-height:21px;color:#000;transform:scaleX(0.9909);transform-origin:0 50%;">OK</span>
<span class="t" style="left:1081.18px;top:814px;font-size:16px;line-height:21px;color:#000;transform:scaleX(1.0208);transform-origin:0 50%;">Cancel</span>
<span class="t" style="left:1207.60px;top:814px;font-size:16px;line-height:21px;color:#9d9d9d;transform:scaleX(0.9950);transform-origin:0 50%;">Apply</span>
</body>
</html>
